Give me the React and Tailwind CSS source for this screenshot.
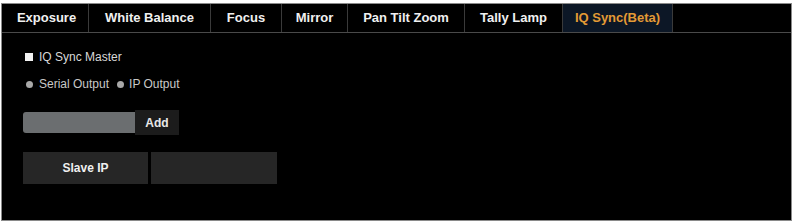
const TABS = [
  { label: 'Exposure', w: 'w-[84px]' },
  { label: 'White Balance', w: 'w-[122px]' },
  { label: 'Focus', w: 'w-[71px]' },
  { label: 'Mirror', w: 'w-[66px]' },
  { label: 'Pan Tilt Zoom', w: 'w-[117px]' },
  { label: 'Tally Lamp', w: 'w-[98px]' },
  { label: 'IQ Sync(Beta)', w: 'w-[110px]', active: true },
]

export default function App() {
  return (
    <div className="h-[224px] w-[794px] bg-white pt-[3px] pl-[1px] font-['Liberation_Sans',Arial,sans-serif]">
      <div className="flex h-[218px] w-[791px] flex-col border border-[#8a8a8a] bg-black">
        {/* Tabs */}
        <div className="flex h-[29px] border-b border-[#4a4a4a] pl-[3px]">
          {TABS.map((t) => (
            <div
              key={t.label}
              className={`flex ${t.w} items-center justify-center border-r border-[#3a3a3a] text-[13px] font-bold ${
                t.active ? 'bg-[#0c1726] text-[#e39a35]' : 'text-[#f0f0f0]'
              }`}
            >
              {t.label}
            </div>
          ))}
        </div>

        {/* Body */}
        <div className="flex flex-col px-[21px] pt-[15px]">
          <label className="flex items-center gap-[6px] pl-[2px] text-[12px] text-[#d8d8d8]">
            <span className="h-[8px] w-[8px] bg-[#f2f2f2]" />
            IQ Sync Master
          </label>

          <div className="mt-[9px] flex items-center pl-[3px] text-[12px] text-[#c8c8c8]">
            <span className="h-[7px] w-[7px] rounded-full bg-[#a8a8a8]" />
            <span className="ml-[6px]">Serial Output</span>
            <span className="ml-[8px] h-[7px] w-[7px] rounded-full bg-[#a8a8a8]" />
            <span className="ml-[5px]">IP Output</span>
          </div>

          <div className="mt-[17px] flex items-center">
            <div className="h-[21px] w-[112px] rounded-l-[3px] bg-[#6b6e70]" />
            <div className="flex h-[25px] w-[44px] items-center justify-center bg-[#1c1c1c] text-[12px] font-bold text-[#e8e8e8]">
              Add
            </div>
          </div>

          <div className="mt-[17px] flex gap-[3px]">
            <div className="flex h-[32px] w-[125px] items-center justify-center bg-[#262626] text-[12px] font-bold text-[#f0f0f0]">
              Slave IP
            </div>
            <div className="h-[32px] w-[126px] bg-[#262626]" />
          </div>
        </div>
      </div>
    </div>
  )
}
